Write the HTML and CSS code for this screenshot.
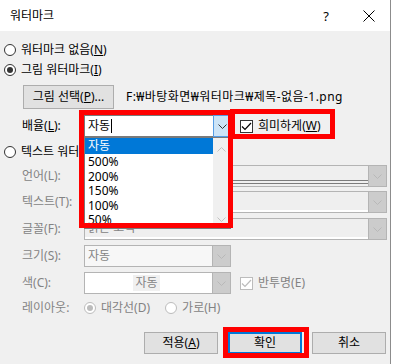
FILE: index.html
```html
<!DOCTYPE html>
<html lang="ko">
<head>
<meta charset="utf-8">
<title>워터마크</title>
<link rel="stylesheet" href="styles.css">
</head>
<body>
<div class="screen">
  <div class="dialog">
    <div class="titlebar">
      <span class="title">워터마크</span>
      <span class="tb-btn help">?</span>
      <span class="tb-btn close"><svg width="12" height="12" viewBox="0 0 12 12"><path d="M0.5 0.5 L11.5 11.5 M11.5 0.5 L0.5 11.5" stroke="#000" stroke-width="1"/></svg></span>
    </div>
    <div class="content">
      <div class="radio-row"><span class="radio"></span><span>워터마크 없음(<u>N</u>)</span></div>
      <div class="radio-row"><span class="radio on"></span><span>그림 워터마크(<u>I</u>)</span></div>
      <div class="pic-row">
        <span class="button pick">그림 선택(<u>P</u>)...</span>
        <span class="path">F:₩바탕화면₩워터마크₩제목-없음-1.png</span>
      </div>
      <div class="field scale-row">
        <span class="lbl">배율(<u>L</u>):</span>
        <div class="combo short active">
          <span class="txt">자동<span class="caret"></span></span>
          <span class="dd blue"><svg width="9" height="5" viewBox="0 0 9 5"><path d="M0.5 0.5 L4.5 4.5 L8.5 0.5" fill="none" stroke="#333" stroke-width="1"/></svg></span>
        </div>
        <label class="check"><span class="box"><svg width="11" height="9" viewBox="0 0 11 9"><path d="M1 4.5 L4 7.5 L10 1" fill="none" stroke="#000" stroke-width="1.2"/></svg></span><span>희미하게(<u>W</u>)</span></label>
      </div>
      <div class="radio-row text-wm"><span class="radio"></span><span>텍스트 워터마크(<u>X</u>)</span></div>
      <div class="field f-lang">
        <span class="lbl dis">언어(L):</span>
        <div class="combo wide disabled">
          <span class="txt"><span class="dbl"></span></span>
          <span class="dd gray"><svg width="9" height="5" viewBox="0 0 9 5"><path d="M0.5 0.5 L4.5 4.5 L8.5 0.5" fill="none" stroke="#b8b8b8" stroke-width="1"/></svg></span>
        </div>
      </div>
      <div class="field f-next">
        <span class="lbl dis">텍스트(T):</span>
        <div class="combo wide disabled strip">
          <span class="txt"></span>
          <span class="dd gray"><svg width="9" height="5" viewBox="0 0 9 5"><path d="M0.5 0.5 L4.5 4.5 L8.5 0.5" fill="none" stroke="#b8b8b8" stroke-width="1"/></svg></span>
        </div>
      </div>
      <div class="field f-next">
        <span class="lbl dis">글꼴(F):</span>
        <div class="combo wide disabled strip">
          <span class="txt dis">맑은 고딕</span>
          <span class="dd gray"><svg width="9" height="5" viewBox="0 0 9 5"><path d="M0.5 0.5 L4.5 4.5 L8.5 0.5" fill="none" stroke="#b8b8b8" stroke-width="1"/></svg></span>
        </div>
      </div>
      <div class="field f-next">
        <span class="lbl dis">크기(S):</span>
        <div class="combo short disabled plain">
          <span class="txt dis">자동</span>
          <span class="dd gray"><svg width="9" height="5" viewBox="0 0 9 5"><path d="M0.5 0.5 L4.5 4.5 L8.5 0.5" fill="none" stroke="#b8b8b8" stroke-width="1"/></svg></span>
        </div>
      </div>
      <div class="field f-next">
        <span class="lbl dis">색(C):</span>
        <div class="combo short disabled white">
          <span class="txt center"><span class="chip dis">자동</span></span>
          <span class="dd gray"><svg width="9" height="5" viewBox="0 0 9 5"><path d="M0.5 0.5 L4.5 4.5 L8.5 0.5" fill="none" stroke="#b8b8b8" stroke-width="1"/></svg></span>
        </div>
        <label class="check dis-check"><span class="box"><svg width="11" height="9" viewBox="0 0 11 9"><path d="M1 4.5 L4 7.5 L10 1" fill="none" stroke="#bcbcbc" stroke-width="1.2"/></svg></span><span class="dis">반투명(E)</span></label>
      </div>
      <div class="field layout-row">
        <span class="lbl dis">레이아웃:</span>
        <span class="radio dis-radio on"></span><span class="dis opt">대각선(D)</span>
        <span class="radio dis-radio second"></span><span class="dis opt">가로(H)</span>
      </div>
      <div class="buttons">
        <span class="button">적용(<u>A</u>)</span>
        <span class="button default">확인</span>
        <span class="button">취소</span>
      </div>
    </div>
  </div>

  <div class="droplist">
    <div class="items">
      <div class="item sel">자동</div>
      <div class="item">500%</div>
      <div class="item">200%</div>
      <div class="item">150%</div>
      <div class="item">100%</div>
      <div class="item">50%</div>
    </div>
    <div class="scroll">
      <svg width="9" height="5" viewBox="0 0 9 5"><path d="M0.5 4.5 L4.5 0.5 L8.5 4.5" fill="none" stroke="#c2c2c2" stroke-width="1"/></svg>
      <svg width="9" height="5" viewBox="0 0 9 5"><path d="M0.5 0.5 L4.5 4.5 L8.5 0.5" fill="none" stroke="#c2c2c2" stroke-width="1"/></svg>
    </div>
  </div>

  <div class="mark mark-scale"></div>
  <div class="mark mark-faint"></div>
  <div class="mark mark-ok"></div>
</div>
</body>
</html>
```

FILE: styles.css
```css
* { box-sizing: border-box; margin: 0; padding: 0; }

html, body {
  width: 396px;
  height: 364px;
  overflow: hidden;
  background: #ffffff;
}

body {
  font-family: "Noto Sans", "Noto Sans CJK KR", sans-serif;
  font-size: 12px;
  line-height: 16px;
  color: #000;
}

u { text-decoration: underline; text-underline-offset: 1px; }

.screen {
  position: relative;
  width: 396px;
  height: 364px;
  display: flex;
}

.dialog {
  width: 391px;
  height: 364px;
  background: #f0f0f0;
  border-right: 1px solid #8c8c8c;
  display: flex;
  flex-direction: column;
}

.titlebar {
  height: 31px;
  background: #ffffff;
  display: flex;
  align-items: center;
  padding-left: 10px;
}

.title { flex: 1; }

.tb-btn {
  width: 44px;
  height: 31px;
  display: flex;
  align-items: center;
  justify-content: center;
}

.help { font-size: 13px; }
.close { width: 42px; }

.content {
  padding-top: 9px;
  display: flex;
  flex-direction: column;
}

.radio-row {
  height: 20px;
  display: flex;
  align-items: center;
  gap: 5px;
  padding-left: 4px;
}

.radio {
  width: 12px;
  height: 12px;
  border-radius: 50%;
  border: 1px solid #333;
  background: #fff;
  display: grid;
  place-items: center;
  flex: none;
}

.radio.on::after {
  content: "";
  width: 6px;
  height: 6px;
  border-radius: 50%;
  background: #333;
}

.pic-row {
  margin-top: 5px;
  height: 24px;
  display: flex;
  align-items: center;
  padding-left: 23px;
}

.button {
  height: 22px;
  width: 74px;
  background: #e1e1e1;
  border: 1px solid #adadad;
  display: flex;
  align-items: center;
  justify-content: center;
}

.button.pick {
  width: 91px;
  height: 24px;
}

.path {
  margin-left: 12px;
  letter-spacing: 0.45px;
}

.field {
  height: 22px;
  display: flex;
  align-items: center;
}

.lbl {
  width: 84px;
  padding-left: 22px;
  flex: none;
}

.dis { color: #838383; }

.scale-row { margin-top: 6px; }
.text-wm { margin-top: 5px; }
.f-lang { margin-top: 3px; }
.f-next { margin-top: 4px; }
.f-next + .f-next { margin-top: 5px; }

.combo {
  height: 22px;
  border: 1px solid #b4b4b4;
  display: flex;
  flex: none;
}

.combo.short { width: 147px; }
.combo.wide { width: 303px; }

.combo.active {
  background: #fff;
  border-color: #7a7a7a;
}

.combo .txt {
  flex: 1;
  padding-left: 3px;
  display: flex;
  align-items: center;
  position: relative;
}

.combo .txt.center { justify-content: center; padding-left: 0; padding-right: 4px; }

.caret {
  display: inline-block;
  width: 1px;
  height: 14px;
  background: #000;
  margin-left: 1px;
}

.combo .dd {
  width: 18px;
  display: flex;
  align-items: center;
  justify-content: center;
}

.dd.blue {
  background: #cce4f7;
  border: 1px solid #569de5;
  margin: -1px -1px -1px 0;
  width: 18px;
}

.dd.gray {
  background: #cccccc;
  border-left: 1px solid #b4b4b4;
}

.combo.disabled { background: #efefef; }
.combo.strip .txt { border-bottom: 2px solid #fff; }
.combo.plain { background: #f7f7f7; }
.combo.white { background: #fff; }

.dbl {
  position: absolute;
  left: 0;
  right: 0;
  bottom: 2px;
  height: 4px;
  border-top: 1px solid #7c7c7c;
  border-bottom: 1px solid #7c7c7c;
}

.chip {
  background: #f0f0f0;
  padding: 0 2px;
}

.check {
  display: flex;
  align-items: center;
  gap: 5px;
  margin-left: 9px;
}

.check .box {
  width: 13px;
  height: 13px;
  border: 1px solid #333;
  background: #fff;
  display: grid;
  place-items: center;
}

.dis-check .box { border-color: #bcbcbc; }

.layout-row {
  margin-top: 4px;
  height: 20px;
}

.layout-row .lbl { width: 84px; }

.dis-radio {
  border-color: #bcbcbc;
  margin-right: 5px;
}

.dis-radio.on::after { background: #bcbcbc; }

.dis-radio.second { margin-left: 15px; }

.buttons {
  margin-top: 14px;
  display: flex;
  gap: 10px;
  padding-left: 144px;
}

.button.default {
  border-color: #0078d7;
  box-shadow: inset 0 0 0 1px #0078d7;
}

/* dropdown list overlay */
.droplist {
  position: absolute;
  left: 84px;
  top: 137px;
  width: 147px;
  height: 92px;
  background: #fff;
  border: 1px solid #7a7a7a;
  display: flex;
}

.items { flex: 1; }

.item {
  height: 14.6px;
  line-height: 14.6px;
  padding-left: 3px;
  padding-top: 1px;
}

.item.sel {
  height: 16px;
  line-height: 16px;
  padding-top: 0;
  background: #0078d7;
  color: #fff;
}

.scroll {
  width: 17px;
  background: #f0f0f0;
  display: flex;
  flex-direction: column;
  align-items: center;
  justify-content: space-between;
  padding: 9px 0 6px;
}

/* red annotation frames */
.mark {
  position: absolute;
  border: 5px solid #ff0000;
}

.mark-scale { left: 79px; top: 110px; width: 154px; height: 118px; }
.mark-faint { left: 230px; top: 109px; width: 105px; height: 30px; }
.mark-ok { left: 223px; top: 327px; width: 86px; height: 31px; }
```
